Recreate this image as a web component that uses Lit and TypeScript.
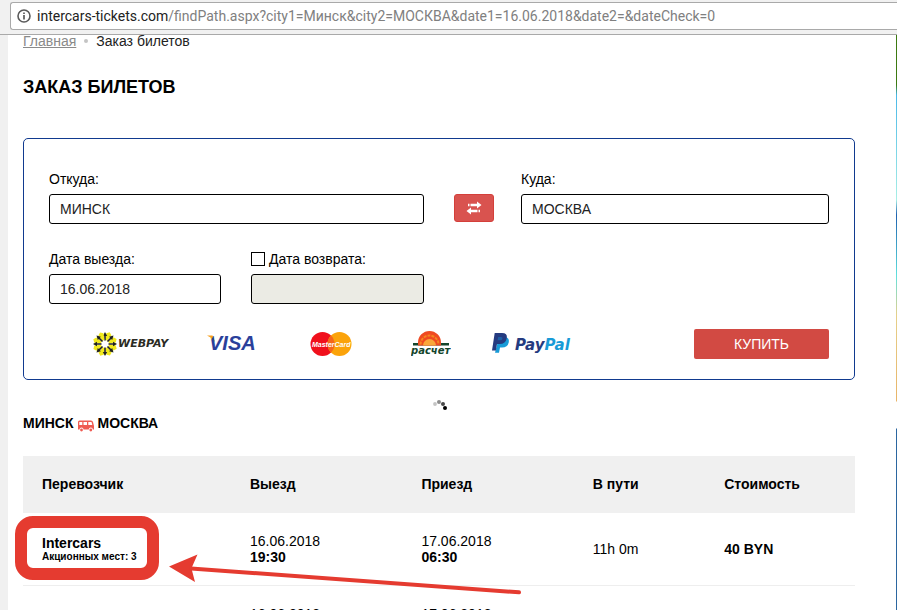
import { LitElement, html, svg, css } from "lit";
import { customElement, property } from "lit/decorators.js";

interface Trip {
  carrier: string;
  promo: string;
  departDate: string;
  departTime: string;
  arriveDate: string;
  arriveTime: string;
  duration: string;
  price: string;
}

const trips: Trip[] = [
  {
    carrier: "Intercars",
    promo: "Акционных мест: 3",
    departDate: "16.06.2018",
    departTime: "19:30",
    arriveDate: "17.06.2018",
    arriveTime: "06:30",
    duration: "11h 0m",
    price: "40 BYN",
  },
  {
    carrier: "",
    promo: "",
    departDate: "16.06.2018",
    departTime: "",
    arriveDate: "17.06.2018",
    arriveTime: "",
    duration: "",
    price: "",
  },
];

@customElement("address-bar")
export class AddressBar extends LitElement {
  static styles = css`
    :host {
      display: block;
      box-sizing: border-box;
      height: 35px;
      padding: 2px 0 0 10px;
      background: #f1f1f1;
      border-bottom: 1px solid #a9a9a9;
    }
    .field {
      display: flex;
      align-items: center;
      gap: 6px;
      box-sizing: border-box;
      height: 28px;
      padding-left: 6px;
      background: #fff;
      border: 1px solid #a9a9a9;
      border-right: 0;
      border-radius: 3px 0 0 3px;
      font: 14px/20px Roboto, "Open Sans", sans-serif;
      color: #222;
      white-space: nowrap;
      overflow: hidden;
    }
    .path {
      color: #808080;
    }
    svg {
      flex: none;
    }
  `;

  render() {
    return html`<div class="field">
      <svg width="14" height="14" viewBox="0 0 14 14" aria-hidden="true">
        <circle cx="7" cy="7" r="6" fill="none" stroke="#5a5a5a" stroke-width="1.6" />
        <path d="M7 6v4.4M7 3.4v1.6" stroke="#5a5a5a" stroke-width="1.7" />
      </svg>
      <div>intercars-tickets.com<span class="path">/findPath.aspx?city1=Минск&amp;city2=МОСКВА&amp;date1=16.06.2018&amp;date2=&amp;dateCheck=0</span></div>
    </div>`;
  }
}

@customElement("pay-logos")
export class PayLogos extends LitElement {
  static styles = css`
    :host {
      display: grid;
      grid-template-columns: repeat(5, minmax(0, 100px));
      justify-items: center;
      align-items: center;
      flex: 1;
    }
    .webpay {
      font: italic bold 11px "DejaVu Sans", sans-serif;
      fill: #2b2b24;
    }
    .visa {
      font: italic bold 20px "Liberation Sans", sans-serif;
      fill: url(#visa-fill);
    }
    .master {
      font: italic bold 7px "Liberation Sans", sans-serif;
      fill: #fff;
    }
    .raschet {
      font: italic bold 10px "DejaVu Sans", sans-serif;
      fill: #14452c;
    }
    .paypal {
      font: italic bold 15px "DejaVu Sans", sans-serif;
      fill: #253b80;
    }
    .pal {
      fill: #189bd7;
    }
  `;

  private rays() {
    return [0, 45, 90, 135, 180, 225, 270, 315].map(
      (a) => svg`
        <path d="M12 9L10.200 2.600L13 0.400L15.800 2.600L14 9z" fill="#f2ea1c" transform=${`rotate(${a + 22} 13 13)`} />
        <path d="M12.200 9.500V5H10.800L13 1L15.200 5H13.800V9.500z" fill="#23231c" transform=${`rotate(${a} 13 13)`} />`
    );
  }

  render() {
    return html`
      <svg width="78" height="26" viewBox="0 0 78 26" role="img" aria-label="WebPay">
        ${this.rays()}
        <text class="webpay" x="26" y="16">WEBPAY</text>
      </svg>
      <svg width="50" height="26" viewBox="0 0 50 26" role="img" aria-label="Visa">
        <defs>
          <linearGradient id="visa-fill" gradientUnits="userSpaceOnUse" x1="2" y1="4" x2="10" y2="9">
            <stop offset="0.5" stop-color="#f7a020" />
            <stop offset="0.6" stop-color="#2a3f9a" />
          </linearGradient>
        </defs>
        <path d="M1 4.600H6.500L9 11Q6 6.500 1 4.600z" fill="#f7a020" />
        <text class="visa" x="3" y="19">VISA</text>
      </svg>
      <svg width="42" height="26" viewBox="0 0 42 26" role="img" aria-label="MasterCard">
        <circle cx="12.5" cy="13" r="12" fill="#f0101c" />
        <circle cx="29.5" cy="13" r="12" fill="#fba30a" />
        <path d="M21 4.5a12 12 0 0 1 0 17a12 12 0 0 1 0-17z" fill="#f5661a" />
        <text class="master" x="2" y="16">MasterCard</text>
      </svg>
      <svg width="40" height="28" viewBox="0 0 40 28" role="img" aria-label="Расчет">
        <path d="M2 13H38V15.500H2z" fill="#14452c" />
        <path d="M7 15.500V12.500a11.500 11.500 0 0 1 23 0v3z" fill="#ef4a22" />
        <path d="M9.500 14.500a9 9 0 0 1 18 0" fill="none" stroke="#f5871f" stroke-width="2" stroke-dasharray="3 1" />
        <path d="M12 15.500a6.500 6.500 0 0 1 13 0z" fill="#f9a73a" />
        <text class="raschet" x="0" y="24">расчет</text>
      </svg>
      <svg width="80" height="26" viewBox="0 0 80 26" role="img" aria-label="PayPal">
        <path d="M8 6h6.500q4 1 3.300 5.200q-1.200 5.300-6.800 5.300h-2l-1 5.200H4z" fill="#189bd7" />
        <path d="M3.700 2h7.300q5.600 0 4.800 5q-1 6-7.300 6H6L4.900 19.500H1z" fill="#253b80" />
        <path d="M7.200 6h3q1.500 0.200 1.200 1.700q-0.400 1.500-2.300 1.500H6.600z" fill="#1d5fa5" />
        <text class="paypal" x="24" y="19">Pay<tspan class="pal">Pal</tspan></text>
      </svg>
    `;
  }
}

@customElement("search-form")
export class SearchForm extends LitElement {
  static styles = css`
    :host {
      display: block;
      border: 1px solid #113a8f;
      border-radius: 5px;
      padding: 30px 25px 20px;
    }
    form {
      display: grid;
      row-gap: 25px;
    }
    .row {
      display: grid;
      grid-template-columns: 375fr 97px 308fr;
      align-items: end;
    }
    .dates {
      display: grid;
      grid-template-columns: 172fr 173fr;
      gap: 30px;
    }
    .field {
      display: grid;
      gap: 5px;
      line-height: 20px;
    }
    .text {
      box-sizing: border-box;
      width: 100%;
      height: 30px;
      padding: 0 10px;
      border: 1px solid #000;
      border-radius: 3px;
      background: #fff;
      font: inherit;
      color: #222;
    }
    .text:disabled {
      background: #ebebe4;
    }
    .check {
      display: flex;
      align-items: center;
      gap: 4px;
    }
    .box {
      appearance: none;
      box-sizing: border-box;
      width: 14px;
      height: 14px;
      margin: 0;
      border: 1px solid #000;
      background: #fff;
    }
    .swap {
      display: grid;
      place-items: center;
      width: 40px;
      height: 28px;
      margin: 0 0 2px 30px;
      padding: 0;
      border: 1px solid #d43f3a;
      border-radius: 3px;
      background: #d9534f;
    }
    .pay {
      display: flex;
      padding-left: 32px;
    }
    .buy {
      width: 135px;
      height: 30px;
      padding: 0;
      border: 0;
      border-radius: 2px;
      background: #d24a43;
      color: #fff;
      font: inherit;
    }
  `;

  render() {
    return html`<form @submit=${(e: Event) => e.preventDefault()}>
      <div class="row">
        <div class="field">
          <label for="from">Откуда:</label>
          <input class="text" id="from" type="text" .value=${"МИНСК"} />
        </div>
        <button class="swap" type="button" aria-label="Поменять местами">
          <svg width="16" height="14" viewBox="0 0 16 14" aria-hidden="true">
            <path d="M11 0.500L15.500 4L11 7.500V5.300H5V2.700H11z" fill="#fff" />
            <path d="M2 2.700h1v2.600h-1zM3.500 2.700h1v2.600h-1zM11.500 8.700h1v2.600h-1zM13 8.700h1v2.600h-1z" fill="#fff" />
            <path d="M5 6.500L0.500 10L5 13.500V11.300H11V8.700H5z" fill="#fff" />
          </svg>
        </button>
        <div class="field">
          <label for="to">Куда:</label>
          <input class="text" id="to" type="text" .value=${"МОСКВА"} />
        </div>
      </div>
      <div class="row">
        <div class="dates">
          <div class="field">
            <label for="out">Дата выезда:</label>
            <input class="text" id="out" type="text" .value=${"16.06.2018"} />
          </div>
          <div class="field">
            <div class="check">
              <input class="box" id="return" type="checkbox" />
              <label for="return">Дата возврата:</label>
            </div>
            <input class="text" type="text" aria-label="Дата возврата" disabled />
          </div>
        </div>
      </div>
      <div class="pay">
        <pay-logos></pay-logos>
        <button class="buy" type="submit">КУПИТЬ</button>
      </div>
    </form>`;
  }
}

@customElement("trip-table")
export class TripTable extends LitElement {
  @property({ attribute: false }) trips: Trip[] = [];

  static styles = css`
    :host {
      display: block;
      position: relative;
    }
    table {
      width: 100%;
      table-layout: fixed;
      border-collapse: collapse;
      line-height: 16px;
    }
    .c1 {
      width: 25%;
    }
    .c2,
    .c3 {
      width: 20.6%;
    }
    .c4 {
      width: 15.8%;
    }
    th,
    td {
      padding: 0 0 0 19px;
      text-align: left;
    }
    th {
      height: 56px;
      padding-bottom: 1px;
      background: #f0f0f0;
    }
    td {
      height: 72px;
      border-bottom: 1px solid #eee;
    }
    .promo {
      font-size: 10px;
      line-height: 12px;
    }
    .mark {
      position: absolute;
      top: 60px;
      left: -8px;
      box-sizing: border-box;
      width: 144px;
      height: 64px;
      border: 12px solid #e53b30;
      border-radius: 18px;
    }
    .arrow {
      position: absolute;
      top: 97px;
      left: 145px;
    }
  `;

  render() {
    return html`<table>
        <colgroup>
          <col class="c1" />
          <col class="c2" />
          <col class="c3" />
          <col class="c4" />
          <col />
        </colgroup>
        <thead>
          <tr>
            <th>Перевозчик</th>
            <th>Выезд</th>
            <th>Приезд</th>
            <th>В пути</th>
            <th>Стоимость</th>
          </tr>
        </thead>
        <tbody>
          ${this.trips.map(
            (t) => html`<tr>
              <td>
                <b>${t.carrier}</b>
                <div class="promo"><b>${t.promo}</b></div>
              </td>
              <td>${t.departDate}<br /><b>${t.departTime}&nbsp;</b></td>
              <td>${t.arriveDate}<br /><b>${t.arriveTime}&nbsp;</b></td>
              <td>${t.duration}</td>
              <td><b>${t.price}</b></td>
            </tr>`
          )}
        </tbody>
      </table>
      <div class="mark"></div>
      <svg class="arrow" width="356" height="42" viewBox="0 0 356 42" aria-hidden="true">
        <path d="M1 13.500L29.500 1.500L24 14V17.500L27 29z" fill="#e53b30" />
        <path d="M23 15.500L351 39.300" stroke="#e53b30" stroke-width="4" stroke-linecap="round" />
      </svg>`;
  }
}

@customElement("app-root")
export class AppRoot extends LitElement {
  static styles = css`
    :host {
      display: flex;
      flex-direction: column;
      height: 100vh;
      overflow: hidden;
      background: #fff;
      color: #000;
      font: 14px/20px "Liberation Sans", Arial, sans-serif;
    }
    address-bar {
      flex: none;
    }
    .page {
      flex: 1;
      min-height: 0;
      display: flex;
      overflow: hidden;
    }
    .gutter {
      width: 8px;
      background: #f0f0f0;
    }
    main {
      flex: 1;
      min-width: 0;
      margin-top: -4px;
      padding: 0 41px 0 15px;
    }
    .scene {
      width: 1px;
      background: linear-gradient(
        #3d7a12 0 50px,
        #4ab8e8 60px,
        #a8efe6 165px,
        #1f62b0 180px,
        #5fe0de 240px,
        #e6d08a 280px,
        #e8b468 366px,
        #fff 367px 393px,
        #2b66a0 394px
      );
    }
    .crumbs {
      display: flex;
      align-items: center;
      gap: 8px;
      color: #222;
    }
    .crumbs a {
      color: #8a8a8a;
    }
    .dot {
      width: 4px;
      height: 4px;
      border-radius: 50%;
      background: #c4c4c4;
    }
    h1 {
      margin: 24px 0 39px;
      font-size: 18px;
      line-height: 24px;
    }
    .loader {
      display: block;
      margin: 20px auto 0;
    }
    h2 {
      display: flex;
      align-items: center;
      gap: 4px;
      margin: 0 0 26px;
      font-size: 14px;
      line-height: 14px;
    }
    .bus {
      height: 12px;
      align-self: end;
      margin-bottom: -2px;
    }
  `;

  render() {
    return html`
      <address-bar></address-bar>
      <div class="page">
        <div class="gutter"></div>
        <main>
          <nav class="crumbs">
            <a href="#">Главная</a><span class="dot"></span><span>Заказ билетов</span>
          </nav>
          <h1>ЗАКАЗ БИЛЕТОВ</h1>
          <search-form></search-form>
          <svg class="loader" width="16" height="16" viewBox="0 0 16 16" role="img" aria-label="Загрузка">
            <circle cx="4" cy="4" r="1.900" fill="#c4c4c4" />
            <circle cx="8" cy="2" r="2" fill="#8c8c8c" />
            <circle cx="12" cy="4" r="2" fill="#484848" />
            <circle cx="14" cy="8" r="2" fill="#000" />
          </svg>
          <h2>
            МИНСК
            <svg class="bus" width="16" height="12" viewBox="0 0 16 12" aria-hidden="true">
              <path
                fill="#ef5b52"
                fill-rule="evenodd"
                d="M1.500 0.500H13Q14.500 0.500 15 2L16 6V9.500H14.800a2 2 0 0 0-4 0H5.500a2 2 0 0 0-4 0H0V2Q0 0.500 1.500 0.500zM1.300 2V5H4.300V2zM5.500 2V5H9V2zM10.300 2V5H14.300L13.500 2z"
              />
              <circle cx="3.500" cy="10" r="1.400" fill="#ef5b52" />
              <circle cx="12.800" cy="10" r="1.400" fill="#ef5b52" />
            </svg>
            МОСКВА
          </h2>
          <trip-table .trips=${trips}></trip-table>
        </main>
        <div class="scene"></div>
      </div>
    `;
  }
}
